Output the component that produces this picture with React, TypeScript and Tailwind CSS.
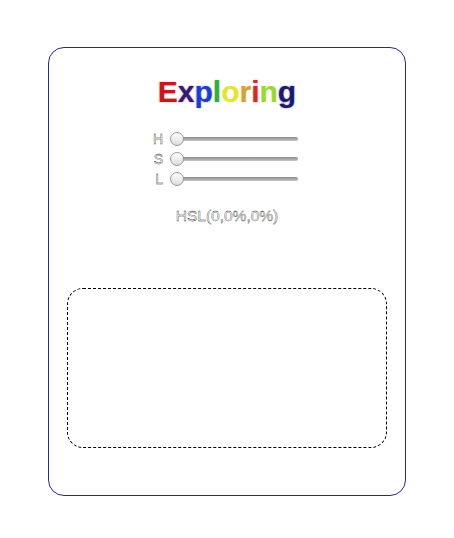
const letters = [
  { ch: "E", cls: "text-[#c41a1c] [text-shadow:0_0_2px_#e88080]" },
  { ch: "x", cls: "text-[#3a1a6e] [text-shadow:0_0_2px_#8a70c0]" },
  { ch: "p", cls: "text-[#1f3ccc] [text-shadow:0_0_2px_#8090f0]" },
  { ch: "l", cls: "text-[#3aa83a] [text-shadow:0_0_2px_#90e090]" },
  { ch: "o", cls: "text-[#e6e23a] [text-shadow:0_0_2px_#f4f490]" },
  { ch: "r", cls: "text-[#d4a23c] [text-shadow:0_0_2px_#f0d090]" },
  { ch: "i", cls: "text-[#d42a2a] [text-shadow:0_0_2px_#f09090]" },
  { ch: "n", cls: "text-[#9ad63c] [text-shadow:0_0_2px_#d0f090]" },
  { ch: "g", cls: "text-[#1b1a6c] [text-shadow:0_0_2px_#7a7ac0]" },
]

// white glyphs with a thin dark edge
const hollow = "text-white [-webkit-text-stroke:0.35px_#222]"

function Slider({ label }: { label: string }) {
  return (
    <div className="flex items-center h-5">
      <span className={`w-[20px] text-right pr-[7px] text-[14px] leading-5 ${hollow}`}>{label}</span>
      <div className="relative w-[128px] h-[14px] flex items-center">
        <div className="ml-[7px] w-[121px] h-[4px] rounded-full bg-gradient-to-b from-[#8c8c8c] to-[#c4c4c4]" />
        <div className="absolute left-0 top-0 w-[14px] h-[14px] rounded-full border border-[#9a9a9a] bg-gradient-to-b from-white to-[#dcdcdc]" />
      </div>
    </div>
  )
}

export default function App() {
  return (
    <div className="w-[454px] h-[538px] bg-white pt-[47px] font-['Liberation_Sans',Arial,sans-serif]">
      <div className="mx-auto w-[358px] h-[449px] border border-[#2a2a7e] rounded-[16px] pt-[26px] flex flex-col items-center">
        <h1 className="text-[30px] leading-[36px] font-bold">
          {letters.map((l, i) => (
            <span key={i} className={l.cls}>{l.ch}</span>
          ))}
        </h1>
        <div className="mt-[19px] mr-[6px] flex flex-col">
          <Slider label="H" />
          <Slider label="S" />
          <Slider label="L" />
        </div>
        <p className={`mt-[17px] text-[15.5px] leading-5 ${hollow}`}>HSL(0,0%,0%)</p>
        <div className="mt-[62px] w-[320px] h-[160px] border border-dashed border-black rounded-[16px]" />
      </div>
    </div>
  )
}
